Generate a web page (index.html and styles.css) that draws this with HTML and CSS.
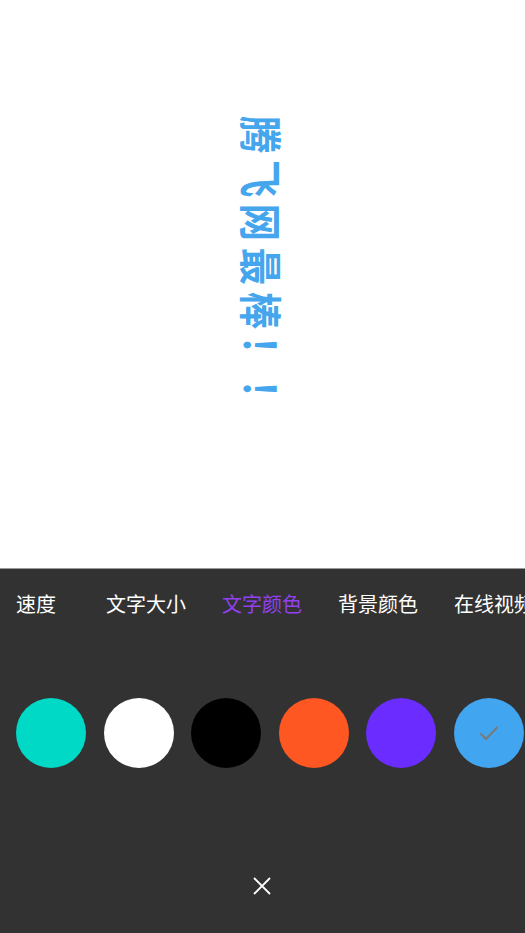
FILE: index.html
```html
<!DOCTYPE html>
<html lang="zh">
<head>
<meta charset="utf-8">
<link rel="stylesheet" href="styles.css">
</head>
<body>
<div class="stage">
  <div class="marquee">腾飞网最棒！！</div>
</div>
<div class="panel">
  <div class="tabs">
    <span class="tab first">速度</span>
    <span class="tab">文字大小</span>
    <span class="tab active">文字颜色</span>
    <span class="tab">背景颜色</span>
    <span class="tab">在线视频</span>
  </div>
  <div class="swatches">
    <span class="swatch teal"></span>
    <span class="swatch white"></span>
    <span class="swatch black"></span>
    <span class="swatch orange"></span>
    <span class="swatch purple"></span>
    <span class="swatch blue">
      <svg class="check" viewBox="0 0 20 20" width="20" height="20"><path d="M1.5 10.5 L7 16 L18.5 4" fill="none" stroke="#7a7a7a" stroke-width="2.2"/></svg>
    </span>
  </div>
  <div class="close">
    <svg viewBox="0 0 20 20" width="20" height="20"><path d="M2 2 L18 18 M18 2 L2 18" stroke="#ffffff" stroke-width="1.8" fill="none"/></svg>
  </div>
</div>
</body>
</html>
```
FILE: styles.css
```css
html, body {
  margin: 0;
  padding: 0;
  background: #ffffff;
  font-family: "Noto Sans CJK SC", "Noto Sans", sans-serif;
}
body {
  width: 525px;
  height: 933px;
  overflow: hidden;
}
.stage {
  height: 568px;
  display: flex;
  align-items: flex-start;
  justify-content: center;
  box-sizing: border-box;
  padding-top: 116px;
}
.marquee {
  writing-mode: vertical-rl;
  text-orientation: sideways;
  font-size: 43px;
  line-height: 46px;
  letter-spacing: 7.5px;
  font-weight: 700;
  color: #45a6ee;
  white-space: nowrap;
  transform: scaleY(0.87);
  transform-origin: top center;
}
.panel {
  height: 365px;
  background: #323232;
  border-top: 1px solid #9a9a9a;
  box-sizing: border-box;
  overflow: hidden;
}
.tabs {
  display: flex;
  align-items: center;
  height: 68px;
  padding-left: 16px;
  gap: 36px;
  white-space: nowrap;
  font-size: 20px;
  color: #ffffff;
}
.tab { flex: none; }
.tab.first { margin-right: 14px; }
.tab.active { color: #9340f0; }
.swatches {
  display: flex;
  margin-top: 61px;
  padding-left: 16px;
  gap: 17.5px;
}
.swatch {
  flex: none;
  width: 70px;
  height: 70px;
  border-radius: 50%;
  display: flex;
  align-items: center;
  justify-content: center;
}
.teal { background: #00d9c5; }
.white { background: #ffffff; }
.black { background: #000000; }
.orange { background: #ff5722; }
.purple { background: #6a2cff; }
.blue { background: #42a5f0; }
.close {
  display: flex;
  justify-content: center;
  margin-top: 108px;
  padding-right: 1px;
}
.close svg { display: block; }
```
